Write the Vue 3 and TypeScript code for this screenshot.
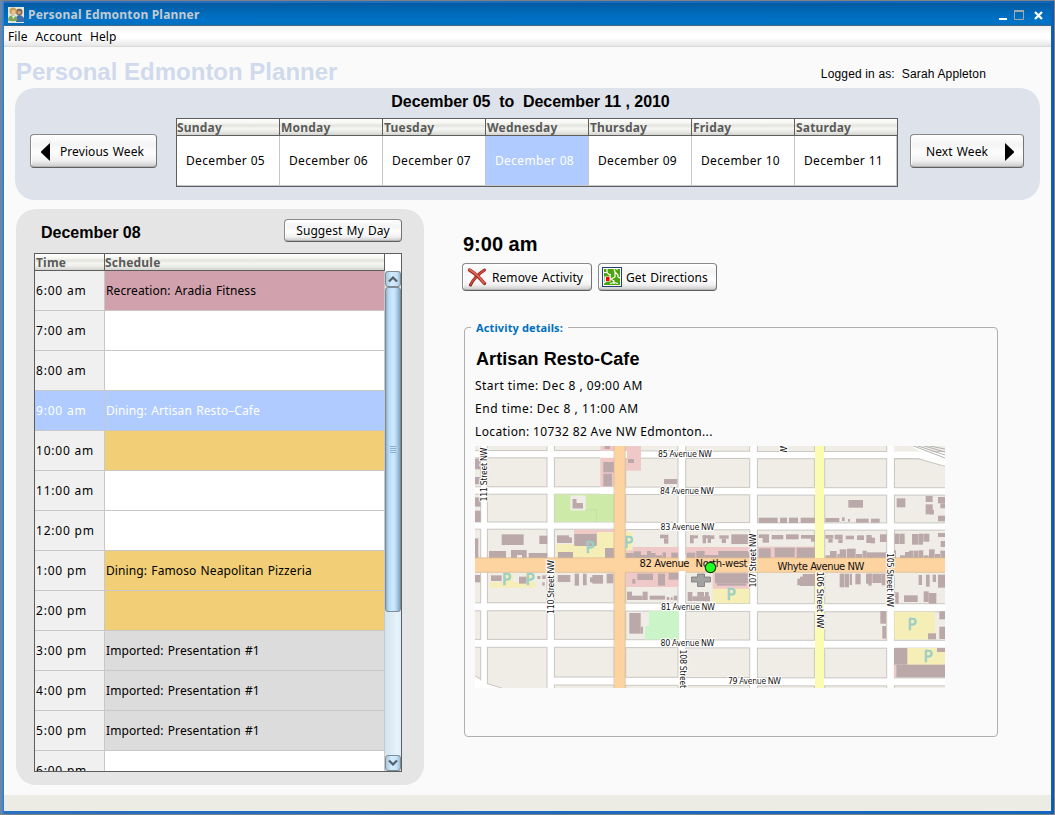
<script setup lang="ts">
type Rect = [number, number, number, number]
type Row = { time: string; text: string; kind: string }
type Tile = { at: string; parking: Rect[]; retail: Rect[]; buildings: Rect[] }

const menus: string[] = ['File', 'Account', 'Help']

const days = ['Sunday', 'Monday', 'Tuesday', 'Wednesday', 'Thursday', 'Friday', 'Saturday'].map((name, i) => ({
  name,
  date: 'December ' + String(5 + i).padStart(2, '0'),
  selected: i === 3,
}))

const rows: Row[] = [
  { time: '6:00 am', text: 'Recreation: Aradia Fitness', kind: 'recreation' },
  { time: '7:00 am', text: '', kind: '' },
  { time: '8:00 am', text: '', kind: '' },
  { time: '9:00 am', text: 'Dining: Artisan Resto–Cafe', kind: 'selected' },
  { time: '10:00 am', text: '', kind: 'dining' },
  { time: '11:00 am', text: '', kind: '' },
  { time: '12:00 pm', text: '', kind: '' },
  { time: '1:00 pm', text: 'Dining: Famoso Neapolitan Pizzeria', kind: 'dining' },
  { time: '2:00 pm', text: '', kind: 'dining' },
  { time: '3:00 pm', text: 'Imported: Presentation #1', kind: 'imported' },
  { time: '4:00 pm', text: 'Imported: Presentation #1', kind: 'imported' },
  { time: '5:00 pm', text: 'Imported: Presentation #1', kind: 'imported' },
  { time: '6:00 pm', text: '', kind: '' },
]

/* City blocks: column spans [x1, x2, y shift] crossed with row spans [y1, y2] */
const columns: [number, number, number][] = [
  [-2, 5.7, 0], [12.4, 72, 0], [79.4, 139.3, 0], [150.7, 203, 0.3],
  [210.7, 274.7, 0.6], [282.4, 339.4, 0.9], [349.7, 411.7, 0.9], [419.4, 472, 0.9],
]
const bands: [number, number][] = [
  [-3, 4.6], [11.8, 40.8], [48.2, 76], [83.2, 114], [124, 156.8], [164.8, 193.4], [201.3, 231], [239, 246],
]
const blocks: Rect[] = columns.flatMap(([x1, x2, d], c) =>
  bands
    .map(([y1, y2], r): Rect => (c < 2 && r === 6 ? [x1, y1 + d, x2 - x1, 50] : [x1, y1 + d, x2 - x1, y2 - y1]))
    .filter((_, r) => !(c < 2 && r === 7)),
)

/* Detail inside the blocks, at three units per pixel */
const tiles: Tile[] = [
  {
    at: 'translate(-5 -6) scale(.33333)',
    retail: [[391, 10, 42, 132], [467, 10, 46, 82], [312, 269, 122, 50], [467, 321, 158, 34], [647, 321, 80, 34]],
    parking: [[259, 313, 173, 41], [381, 276, 51, 60], [467, 276, 21, 55]],
    buildings: [
      [10, 56, 22, 32], [10, 111, 22, 22], [10, 172, 22, 28], [10, 212, 22, 34], [10, 295, 15, 60],
      [95, 283, 66, 32], [208, 287, 24, 25], [57, 333, 51, 22], [123, 330, 47, 25], [176, 339, 56, 16],
      [261, 286, 36, 23], [297, 292, 9, 17], [313, 282, 67, 36], [264, 336, 45, 19], [405, 324, 29, 31],
      [404, 15, 16, 12], [400, 66, 32, 31], [400, 101, 26, 38], [474, 57, 18, 12], [582, 117, 40, 15],
      [570, 284, 25, 11], [582, 295, 13, 16], [660, 286, 24, 9], [660, 286, 11, 24], [698, 286, 24, 9], [698, 286, 10, 24],
      [467, 339, 24, 16], [491, 334, 22, 21], [513, 345, 20, 10], [531, 333, 12, 22], [543, 339, 14, 16],
      [557, 346, 20, 9], [578, 337, 10, 18], [604, 338, 20, 17], [650, 338, 26, 17], [679, 333, 25, 22], [704, 345, 20, 10],
    ],
  },
  {
    at: 'translate(230 -6) scale(.33333)',
    retail: [[15, 321, 120, 34], [159, 320, 171, 35]],
    parking: [],
    buildings: [
      [161, 233, 57, 16], [225, 233, 21, 16], [252, 233, 27, 16], [287, 233, 43, 16], [361, 234, 42, 12],
      [411, 232, 8, 11], [429, 237, 6, 8], [453, 236, 38, 12], [498, 236, 26, 12], [430, 180, 44, 23],
      [575, 175, 26, 27], [662, 168, 21, 18], [662, 193, 21, 30], [675, 209, 12, 14], [699, 171, 22, 19], [706, 190, 15, 15], [699, 227, 22, 17],
      [8, 286, 20, 11], [8, 297, 10, 12], [43, 286, 28, 10], [50, 296, 13, 13], [79, 283, 54, 29],
      [161, 283, 31, 11], [173, 294, 19, 14], [200, 285, 35, 13], [243, 283, 38, 15], [288, 285, 42, 11], [318, 294, 12, 11],
      [361, 285, 24, 11], [370, 296, 13, 12], [389, 284, 24, 14], [400, 298, 13, 11], [422, 287, 25, 11],
      [456, 286, 21, 14], [484, 285, 16, 24], [497, 293, 13, 17], [525, 283, 20, 23],
      [569, 281, 13, 31], [583, 281, 16, 31], [621, 282, 20, 32], [642, 281, 12, 33], [655, 281, 18, 24], [699, 279, 22, 12], [707, 303, 14, 18],
      [15, 345, 25, 10], [40, 333, 92, 22], [161, 325, 36, 30], [209, 323, 60, 28], [275, 323, 55, 32],
      [362, 346, 15, 9], [375, 333, 20, 22], [397, 342, 7, 13], [404, 328, 20, 27], [426, 326, 26, 29], [453, 342, 19, 13],
      [473, 332, 12, 23], [485, 337, 59, 18], [567, 331, 6, 24], [585, 346, 15, 9], [600, 336, 12, 19], [612, 332, 13, 23],
      [626, 332, 15, 23], [642, 331, 13, 24], [656, 346, 15, 9], [672, 328, 17, 27], [690, 342, 15, 13], [706, 332, 15, 23],
    ],
  },
  {
    at: 'translate(-5 114) scale(.33333)',
    retail: [[467, 36, 158, 45]],
    parking: [[59, 67, 83, 16], [99, 41, 30, 30], [138, 66, 58, 17], [163, 42, 23, 25]],
    buildings: [
      [12, 45, 19, 22], [63, 46, 32, 17], [147, 50, 23, 21], [202, 48, 9, 9], [217, 46, 10, 11], [217, 67, 7, 10],
      [263, 45, 38, 21], [314, 41, 13, 36], [339, 41, 11, 35], [360, 52, 12, 15], [367, 45, 32, 26], [410, 41, 20, 29],
      [487, 57, 9, 14], [502, 41, 47, 19], [564, 41, 21, 36], [596, 39, 29, 20],
      [471, 95, 15, 25], [486, 107, 32, 13], [518, 95, 15, 25], [539, 107, 46, 12], [590, 111, 8, 9], [602, 112, 6, 8], [611, 107, 11, 14],
      [653, 96, 14, 27], [667, 109, 53, 14], [682, 96, 20, 14], [478, 159, 34, 62], [512, 200, 7, 21],
    ],
  },
  {
    at: 'translate(230 114) scale(.33333)',
    retail: [[23, 38, 111, 49], [567, 314, 8, 38]],
    parking: [[23, 86, 110, 44], [568, 155, 122, 83], [607, 264, 113, 51]],
    buildings: [
      [30, 40, 101, 30], [36, 70, 88, 7], [285, 50, 45, 28], [277, 56, 8, 20], [293, 42, 37, 10],
      [404, 41, 14, 41], [419, 41, 13, 41], [434, 41, 7, 34], [451, 41, 16, 32], [483, 41, 17, 30], [490, 41, 10, 36], [502, 41, 28, 28], [530, 41, 11, 35],
      [641, 45, 10, 30], [663, 44, 11, 36], [683, 44, 10, 22], [699, 44, 22, 39],
      [569, 97, 12, 34], [597, 106, 41, 20], [656, 94, 15, 32], [671, 99, 23, 32], [0, 96, 11, 28],
      [526, 153, 17, 38], [532, 198, 11, 38], [669, 220, 24, 18], [703, 154, 18, 24], [703, 200, 18, 37],
      [567, 264, 40, 50], [574, 314, 147, 38], [696, 264, 25, 12],
    ],
  },
]

const parkingSigns: [number, number][] = [[115, 107], [153.5, 101.5], [31.5, 139], [55, 138.500], [256, 153.5], [437, 184], [453, 216]]

/* Street names: text, centre x, baseline y, rendered length, rotation, size */
const streets: [string, number, number, number, number, number][] = [
  ['85 Avenue NW', 210, 10.5, 54, 0, 8],
  ['84 Avenue NW', 212, 48.3, 54, 0, 8],
  ['83 Avenue NW', 212.5, 83.5, 54, 0, 8],
  ['81 Avenue NW', 213, 164, 54, 0, 8],
  ['80 Avenue NW', 212.5, 200, 54, 0, 8],
  ['79 Avenue NW', 279.5, 237.5, 53, 0, 8],
  ['82 Avenue', 189.5, 121, 50, 0, 10],
  ['North-west', 246.5, 121, 52, 0, 10],
  ['Whyte Avenue NW', 346, 123.5, 87, 0, 10],
  ['111 Street NW', 12, 28.5, 54, -90, 8],
  ['110 Street NW', 78.5, 141, 54, -90, 8],
  ['107 Street NW', 281, 114.5, 54, -90, 8],
  ['108 Street NW', 204.5, 230.5, 54, 90, 8],
  ['106 Street NW', 342, 154, 57, 90, 8.5],
  ['105 Street NW', 412, 134, 54, 90, 8],
  ['NW', 304.5, 0, 13, 90, 8],
]
</script>

<template>
  <div class="window">
    <div class="frame">
      <header class="titlebar">
        <svg class="app-icon" width="16" height="16" viewBox="0 0 16 16">
          <rect width="16" height="16" fill="#e4e6e0" />
          <circle cx="11.3" cy="5" r="3.2" fill="#7a5b45" />
          <path d="M8 15V11q1-3 3.500-3T16 11v4z" fill="#3d6fae" />
          <circle cx="11.200" cy="5.600" r="2" fill="#c79a78" />
          <circle cx="5" cy="4" r="3.500" fill="#c5a04e" />
          <circle cx="5.500" cy="5" r="2.200" fill="#e6bd94" />
          <path d="M0 13.500q0-5 4.500-5t5 5q-4.500 1.500-9.500 0z" fill="#7fa65a" />
          <path d="M4 9l1.500 3L7 9z" fill="#e8efe0" />
        </svg>
        <span class="titlebar-text">Personal Edmonton Planner</span>
        <svg class="controls" width="44" height="12" viewBox="0 0 44 12">
          <rect x="0" y="9" width="8" height="2" fill="#fff" />
          <path d="M15.500 2v8.500h9V2" fill="none" stroke="#a5a8ab" />
          <path d="M15 2h10" stroke="#a5a8ab" stroke-width="2" />
          <path d="M36 3l7 7M43 3l-7 7" stroke="#fff" stroke-width="2.300" />
        </svg>
      </header>

      <nav class="menubar">
        <span v-for="m in menus" :key="m">{{ m }}</span>
      </nav>

      <main class="content">
        <div class="heading">
          <h1>Personal Edmonton Planner</h1>
          <p class="login">Logged in as:&nbsp; Sarah Appleton</p>
        </div>

        <section class="week">
          <h2>December 05&nbsp; to&nbsp; December 11 , 2010</h2>
          <div class="week-row">
            <button class="btn prev">
              <svg width="9" height="18" viewBox="0 0 9 18"><path d="M9 0v18L0 9.500v-1z" /></svg>
              <span>Previous Week</span>
            </button>
            <div class="week-table">
              <div v-for="d in days" :key="d.name" class="day" :class="{ selected: d.selected }">
                <div class="th">{{ d.name }}</div>
                <div class="date">{{ d.date }}</div>
              </div>
            </div>
            <button class="btn next">
              <span>Next Week</span>
              <svg width="9" height="18" viewBox="0 0 9 18"><path d="M0 0v18l9-8.500v-1z" /></svg>
            </button>
          </div>
        </section>

        <div class="columns">
          <section class="day-panel">
            <div class="day-head">
              <h2>December 08</h2>
              <button class="btn suggest">Suggest My Day</button>
            </div>
            <div class="schedule">
              <div class="sched-main">
                <div class="sched-header">
                  <div class="th">Time</div>
                  <div class="th">Schedule</div>
                </div>
                <div v-for="r in rows" :key="r.time" class="slot" :class="r.kind">
                  <div class="time">{{ r.time }}</div>
                  <div class="entry">{{ r.text }}</div>
                </div>
              </div>
              <div class="scroll">
                <div class="corner"></div>
                <div class="scroll-btn">
                  <svg width="10" height="8" viewBox="0 0 10 8"><path d="M1 6.500l4-4 4 4" fill="none" stroke="#555e66" stroke-width="2.200" /></svg>
                </div>
                <div class="thumb"><i></i><i></i><i></i><i></i></div>
                <div class="track"></div>
                <div class="scroll-btn">
                  <svg width="10" height="8" viewBox="0 0 10 8"><path d="M1 1.500l4 4 4-4" fill="none" stroke="#555e66" stroke-width="2.200" /></svg>
                </div>
              </div>
            </div>
          </section>

          <section class="detail">
            <h2 class="clock">9:00 am</h2>
            <div class="actions">
              <button class="btn remove">
                <svg width="20" height="20" viewBox="0 0 20 20">
                  <path d="M3.500 18Q8 9 17.500 3" fill="none" stroke="#8e241c" stroke-width="3" stroke-linecap="round" />
                  <path d="M3.500 17.500Q8 9 17.500 3" fill="none" stroke="#d2473c" stroke-width="1.600" stroke-linecap="round" />
                  <path d="M2.500 3Q10 7.500 17.500 16.500" fill="none" stroke="#97271f" stroke-width="3.400" stroke-linecap="round" />
                  <path d="M2.500 2.700Q10 7 17 15.800" fill="none" stroke="#df6255" stroke-width="2" stroke-linecap="round" />
                </svg>
                <span>Remove Activity</span>
              </button>
              <button class="btn directions">
                <svg width="20" height="20" viewBox="0 0 20 20">
                  <rect x=".5" y=".5" width="19" height="19" fill="#fff" stroke="#27426f" />
                  <rect x="2" y="2" width="16" height="16" fill="#4da30c" />
                  <path d="M2 5.500h3l2 2h2M5 2v3M8 8v4M12 2l1 3 3 3M13 5v5l-4 2 3 2v3M8 16.500l4-1 4 1M15 2v1M16 8v2l2 1M4 14l-2 2" fill="none" stroke="#fff" stroke-width="1.200" />
                  <rect x="2.500" y="9.500" width="6" height="5" fill="#fff" />
                  <rect x="4" y="10" width="3.500" height="4" fill="#f00" />
                </svg>
                <span>Get Directions</span>
              </button>
            </div>

            <fieldset class="card">
              <legend>Activity details:</legend>
              <h3>Artisan Resto-Cafe</h3>
              <p class="start">Start time: Dec 8 , 09:00 AM</p>
              <p class="end">End time: Dec 8 , 11:00 AM</p>
              <p class="location">Location: 10732 82 Ave NW Edmonton...</p>

              <svg class="map" width="470" height="242" viewBox="0 0 470 242">
                <rect width="470" height="242" fill="#fff" />
                <rect
                  v-for="(b, i) in blocks" :key="i"
                  :x="b[0]" :y="b[1]" :width="b[2]" :height="b[3]"
                  fill="#f0ede6" stroke="#c8c7c3" stroke-width="1"
                />
                <path d="M0 230v12h28L12 238 5 234z" fill="#fff" />
                <path d="M-1 229.500l7 3.500M12 237.500l16 5" stroke="#c8c7c3" fill="none" />
                <path d="M419 12h24l27 8V12l-9-5-20-8h-22z" fill="#fff" opacity=".9" />
                <path d="M419.500 12.900h24l27 7.600v8l-51-1z" fill="#f0ede6" />
                <path d="M419.500 28V12.900h24l27 7.600" fill="none" stroke="#c8c7c3" />
                <path d="M419.500 0v5.500h26L436 0z" fill="#f0ede6" />
                <path d="M436-1l34 13M440-1l30 10M446-1l24 7M450-1l20 4" stroke="#aaa" stroke-width=".9" />
                <rect x="79.500" y="48.300" width="60" height="27.500" fill="#cdeaa9" />
                <rect x="95.300" y="49.500" width="15.500" height="15" fill="#f0ede6" />
                <path d="M97.500 53h4v4h6.500v5.500H97.500z" fill="#bba9a9" />
                <path d="M121.500 76V64H110" fill="none" stroke="#c3dba6" stroke-width=".7" />
                <path d="M174 165h30v28.500h-34V180h4z" fill="#cbf5c9" />
                <g v-for="(t, i) in tiles" :key="'t' + i" :transform="t.at">
                  <rect v-for="(b, j) in t.retail" :key="'r' + j" :x="b[0]" :y="b[1]" :width="b[2]" :height="b[3]" fill="#efc8c8" />
                  <rect v-for="(b, j) in t.parking" :key="'p' + j" :x="b[0]" :y="b[1]" :width="b[2]" :height="b[3]" fill="#f6eeb7" />
                  <rect v-for="(b, j) in t.buildings" :key="'b' + j" :x="b[0]" :y="b[1]" :width="b[2]" :height="b[3]" fill="#bba9a9" />
                </g>
                <path d="M140 4.900h12v6.800h-27V4.900zM125 40.900h14v7h-14z" fill="#fff" />
                <rect x="42" y="109" width="5" height="3" fill="#f0ede6" />
                <path d="M0 112h470v14.200H0z" fill="#fdd3a0" />
                <path d="M0 111.800h470M0 126.300h470" stroke="#d8b98f" stroke-width=".7" />
                <rect x="139.300" width="10.700" height="242" fill="#fdd3a0" />
                <path d="M139 0v112M150.200 0v112M139 126.500V242M150.200 126.500V242" stroke="#d8b98f" stroke-width=".7" />
                <path d="M340 0h9v112h-9zM340 126.200h9V242h-9z" fill="#fcfcb0" />
                <path d="M204 109h6.500v6H204zM73 126h6v4h-6zM275 109h7v4h-7zM204 125h6.500v4H204z" fill="#fff" />
                <text v-for="(p, i) in parkingSigns" :key="'s' + i" :x="p[0]" :y="p[1]" class="parking">P</text>
                <path
                  d="M222.500 128h7v3h6v5h-6v4.500h-7V136h-6v-5h6z"
                  fill="#a2a2a2" stroke="#797979" stroke-width=".8"
                />
                <text
                  v-for="(s, i) in streets" :key="'n' + i"
                  :transform="`translate(${s[1]} ${s[2]}) rotate(${s[4]})`"
                  :font-size="s[5]" :textLength="s[3]" class="street" :class="{ major: s[5] === 10 }"
                >{{ s[0] }}</text>
                <circle cx="235.500" cy="121.500" r="5.200" fill="#2f2" stroke="#0b3d0b" stroke-width="1.200" />
              </svg>
            </fieldset>
          </section>
        </div>
      </main>
      <footer class="statusbar"></footer>
    </div>
  </div>
</template>

<style>
html,
body {
  margin: 0;
  overflow: hidden;
}
</style>

<style scoped>
* {
  box-sizing: border-box;
}

h1, h2, h3, p {
  margin: 0;
  font-family: "Liberation Sans", Arial, sans-serif;
  letter-spacing: 0;
  white-space: nowrap;
}

.window {
  width: 1055px;
  height: 815px;
  padding: 1px;
  background: #7e8284;
  font: 12px/16px "Noto Sans", "DejaVu Sans", sans-serif;
  letter-spacing: .35px;
  color: #000;
}

.frame {
  height: 813px;
  padding: 2px 3px 3px;
  display: flex;
  flex-direction: column;
  background: linear-gradient(90deg, #5b8fc8 0, #3a80ce 2px, #2a70c0 4px, #1266bd 1049px, #0b58ae 100%);
}

.titlebar {
  flex: none;
  height: 23px;
  display: flex;
  align-items: center;
  padding: 0 8px 0 4px;
  background: linear-gradient(#045a9f, #0068b8 40%, #0073c8 80%, #0070c0);
  border-bottom: 1px solid #476a86;
}

.titlebar-text {
  padding-top: 2px;
  margin-left: 4px;
  font-weight: 700;
  letter-spacing: .2px;
  color: #c3cbd1;
}

.app-icon {
  margin-top: 1px;
}

.controls {
  margin: 1px 0 0 auto;
}

.menubar {
  flex: none;
  height: 21px;
  display: flex;
  gap: 8px;
  padding: 3px 4px 1px;
  letter-spacing: .1px;
  background: linear-gradient(#f2f2f2, #fff 40%, #fff 60%, #e6e6e6);
  border-bottom: 1px solid #dadada;
}

.content {
  flex: 1;
  min-height: 0;
  padding: 0 11px;
  background: #fafafa;
}

.statusbar {
  flex: none;
  height: 16px;
  background: #ecece4;
}

.heading {
  height: 41px;
  display: flex;
  justify-content: space-between;
  padding: 11px 54px 0 1px;
}

.heading h1 {
  font-size: 24px;
  line-height: 28px;
  color: #d0daec;
}

.login {
  padding-top: 8px;
  line-height: 16px;
  letter-spacing: .15px;
}

.week {
  height: 112px;
  border-radius: 20px;
  background: #dee2ea;
  padding: 5px 16px 0 15px;
}

.week h2 {
  font-size: 16px;
  line-height: 18px;
  letter-spacing: -.05px;
  text-align: center;
  padding-left: 7px;
}

.week-row {
  display: flex;
  justify-content: space-between;
  margin-top: 7px;
}

.btn {
  display: flex;
  align-items: center;
  justify-content: center;
  padding: 1px 0 0;
  border: 1px solid #8a8a8a;
  border-bottom-color: #5f5f5f;
  border-right-color: #747474;
  border-radius: 4px;
  background: linear-gradient(#fff, #f4f4f4 30%, #fdfdfd 55%, #f1f1f1 80%, #c9c9c9);
  box-shadow: inset 0 -1px 0 #b5b5b5, inset 1px 1px 0 #fff;
  color: #000;
  font: inherit;
  letter-spacing: .07px;
  word-spacing: 1px;
  white-space: nowrap;
}

.btn span {
  padding-top: 1px;
}

.prev,
.next {
  height: 34px;
  margin-top: 16px;
}

.prev {
  width: 127px;
  justify-content: flex-start;
  padding-left: 10px;
  gap: 10px;
}

.next {
  width: 114px;
  justify-content: flex-end;
  padding-right: 9px;
  gap: 17px;
}

.week-table {
  width: 722px;
  height: 69px;
  margin-left: 7px;
  display: flex;
  border: 1px solid #5e5e5e;
  background: #fff;
}

.day {
  width: 103px;
}

.day:last-child {
  width: 102px;
}

.th {
  height: 17px;
  line-height: 18px;
  border-right: 1px solid #5e5e5e;
  border-bottom: 1px solid #5e5e5e;
  background: linear-gradient(#fff, #f6f7f2 25%, #e4e5df 40%, #f5f6f1 60%, #e9eae5 80%, #d2d3ce);
  font-weight: 700;
  letter-spacing: .2px;
  color: #5a5a5a;
}

.day + .day .th {
  padding-left: 1px;
}

.day:last-child .th {
  border-right: 0;
}

.date {
  height: 50px;
  border-right: 1px solid #c8c8c8;
  border-bottom: 1px solid #c8c8c8;
  padding-left: 9px;
  line-height: 50px;
}

.selected .date {
  background: #afcbff;
  color: #fff;
}

.columns {
  display: flex;
  padding: 9px 0 0 1px;
}

.day-panel {
  flex: none;
  width: 408px;
  height: 576px;
  padding: 10px 22px 0 18px;
  border-radius: 20px;
  background: #e5e5e5;
}

.day-head {
  height: 34px;
  display: flex;
  justify-content: space-between;
  padding-left: 7px;
}

.day-head h2 {
  padding-top: 1px;
  font-size: 16px;
  line-height: 26px;
}

.suggest {
  width: 118px;
  height: 23px;
}

.schedule {
  width: 368px;
  height: 519px;
  display: flex;
  overflow: hidden;
  border: 1px solid #5e5e5e;
}

.sched-main {
  width: 350px;
}

.sched-header,
.slot {
  display: grid;
  grid-template-columns: 70px 280px;
}

.sched-header .th:first-child {
  padding-left: 1px;
}

.slot {
  height: 40px;
  line-height: 39px;
}

.time,
.entry {
  border-right: 1px solid #c8c8c8;
  border-bottom: 1px solid #c8c8c8;
  padding-left: 1px;
  white-space: nowrap;
}

.time {
  background: #f0f0f0;
  letter-spacing: .8px;
}

.entry {
  background: #fff;
  letter-spacing: .1px;
  word-spacing: 1px;
}

.recreation .entry {
  background: #d1a2ad;
}

.dining .entry {
  background: #f2cf77;
}

.imported .entry {
  background: #dcdcdc;
}

.slot.selected .time,
.slot.selected .entry {
  background: #afcbff;
  color: #fff;
}

.scroll {
  width: 16px;
  display: flex;
  flex-direction: column;
}

.corner {
  height: 17px;
  background: #fff;
}

.scroll-btn {
  height: 16px;
  display: flex;
  align-items: center;
  justify-content: center;
  border: 1px solid #7f8b95;
  border-radius: 3px;
  background: linear-gradient(90deg, #a9c8e0, #d3ebfb 40%, #c6e3f8 75%, #9fbfd8);
}

.thumb {
  height: 325px;
  display: flex;
  flex-direction: column;
  justify-content: center;
  align-items: center;
  gap: 1px;
  border: 1px solid #7f8b95;
  border-radius: 3px;
  background: linear-gradient(90deg, #8fb2cf, #b9dbf4 20%, #cbe8ff 45%, #c8e6ff 60%, #a9cbe6 80%, #84a5c0);
}

.thumb i {
  width: 6px;
  height: 1px;
  background: #8fb0cb;
}

.track {
  flex: 1;
  background: linear-gradient(90deg, #d3e4ee, #e6f3fb 80%, #d9ecf8);
}

.detail {
  width: 536px;
  padding: 22px 0 0 38px;
  flex: none;
}

.clock {
  font-size: 20px;
  line-height: 26px;
  padding-left: 1px;
}

.actions {
  display: flex;
  gap: 6px;
  margin-top: 6px;
}

.actions .btn {
  height: 28px;
  justify-content: flex-start;
  padding: 0 0 0 4px;
  gap: 5px;
}

.actions .directions {
  padding-left: 3px;
  gap: 4px;
}

.remove {
  width: 130px;
}

.directions {
  width: 119px;
}

.card {
  width: 534px;
  height: 417px;
  margin: 29px 0 0 2px;
  padding: 0 0 0 10px;
  border: 1px solid #b0b0b0;
  border-radius: 4px;
}

.card legend {
  height: 14px;
  margin-left: -4px;
  padding: 0 5px 0 5px;
  line-height: 16px;
  font-weight: 700;
  font-size: 11px;
  letter-spacing: .12px;
  color: #0070c0;
}

.card h3 {
  margin-top: 12px;
  padding-left: 1px;
  font-size: 18px;
  line-height: 26px;
  letter-spacing: .08px;
}

.card p {
  font: inherit;
  line-height: 23px;
  letter-spacing: .46px;
}

.card .end {
  letter-spacing: .55px;
}

.card .start {
  margin-top: 2px;
}

.card .location {
  letter-spacing: .36px;
}

.map {
  display: block;
  margin-top: 3px;
}

.street {
  font-family: "DejaVu Sans", sans-serif;
  letter-spacing: 0;
  text-anchor: middle;
  fill: #111;
  stroke: #fff;
  stroke-width: 2px;
  paint-order: stroke;
}

.street.major {
  stroke: none;
}

.parking {
  font: 400 15px "DejaVu Sans", sans-serif;
  text-anchor: middle;
  letter-spacing: 0;
  fill: #9ccfc5;
  stroke: #9ccfc5;
  stroke-width: .7;
}
</style>
